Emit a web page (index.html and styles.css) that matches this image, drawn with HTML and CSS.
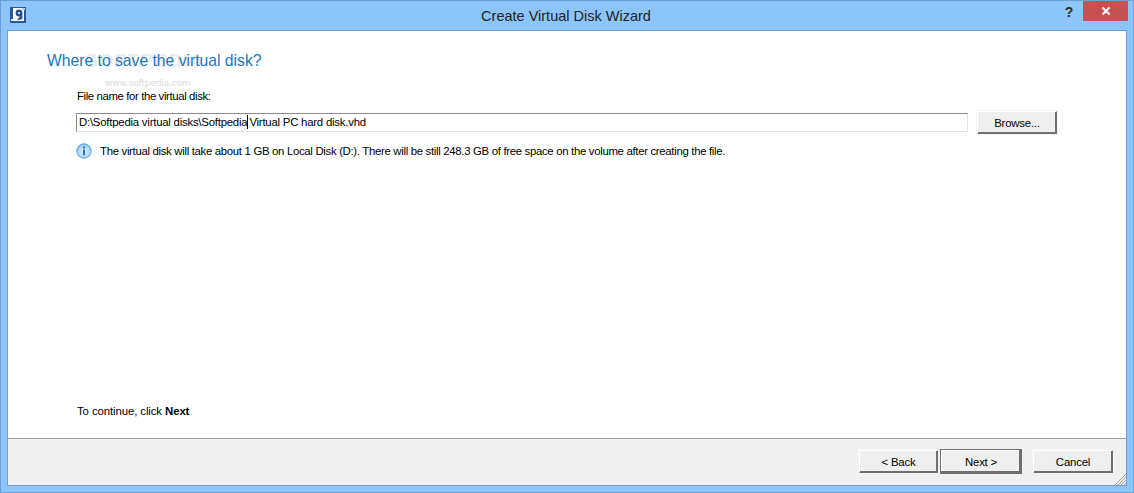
FILE: index.html
```html
<!DOCTYPE html>
<html lang="en">
<head>
<meta charset="utf-8">
<title>Create Virtual Disk Wizard</title>
<link rel="stylesheet" href="styles.css">
</head>
<body>
<div class="window">
  <header class="titlebar">
    <svg class="app-icon" width="16" height="16" viewBox="0 0 16 16">
      <rect width="16" height="16" fill="#2a5a9c"/>
      <rect x="3" y="1" width="11" height="13" fill="#fff"/>
      <circle cx="9" cy="6" r="3.4" fill="#24508e"/>
      <circle cx="9" cy="6" r="1" fill="#fff"/>
      <path d="M12.4 6 L12.4 12 L7 13.5 L9.5 10 Z" fill="#24508e"/>
      <rect x="12" y="1" width="3" height="2" fill="#b9cde8"/>
      <rect x="1" y="12" width="3" height="2" fill="#d6e2f2"/>
    </svg>
    <div class="title">Create Virtual Disk Wizard</div>
    <div class="help">?</div>
    <div class="close">
      <svg width="10" height="10" viewBox="0 0 10 10"><path d="M1.5 1.5 L8.5 8.5 M8.5 1.5 L1.5 8.5" stroke="#fff" stroke-width="2"/></svg>
    </div>
  </header>
  <div class="client">
    <main class="content">
      <div class="watermark" aria-hidden="true">
        <div class="wm-big">SOFTPEDIA</div>
        <div class="wm-small">www.softpedia.com</div>
      </div>
      <h1 class="heading">Where to save the virtual disk?</h1>
      <div class="form">
        <label class="label">File name for the virtual disk:</label>
        <div class="file-row">
          <div class="input">D:\Softpedia virtual disks\Softpedia<span class="caret"></span>Virtual PC hard disk.vhd</div>
          <button class="btn browse">Browse...</button>
        </div>
        <div class="info">
          <svg class="info-icon" width="16" height="16" viewBox="0 0 16 16">
            <defs><radialGradient id="g" cx="50%" cy="55%" r="55%"><stop offset="0" stop-color="#e8f4fd"/><stop offset="0.65" stop-color="#b5daf7"/><stop offset="1" stop-color="#6fb2e8"/></radialGradient></defs>
            <circle cx="8" cy="8" r="7.3" fill="url(#g)" stroke="#5fa5e0" stroke-width="0.9"/>
            <rect x="7" y="3.6" width="2" height="2" fill="#1f6fc0"/>
            <rect x="7" y="6.6" width="2" height="5.6" fill="#1f6fc0"/>
          </svg>
          <span>The virtual disk will take about 1 GB on Local Disk (D:). There will be still 248.3 GB of free space on the volume after creating the file.</span>
        </div>
        <div class="hint">To continue, click <b>Next</b></div>
      </div>
    </main>
    <footer class="footer">
      <button class="btn back">&lt; Back</button>
      <button class="btn next">Next &gt;</button>
      <button class="btn cancel">Cancel</button>
      <svg class="grip" width="12" height="12" viewBox="0 0 12 12"><path d="M12 1 L1 12 M12 4 L4 12 M12 7 L7 12 M12 10 L10 12" stroke="#a0a0a0" stroke-width="1"/></svg>
    </footer>
  </div>
</div>
</body>
</html>
```
FILE: styles.css
```css
* { box-sizing: border-box; }
html, body { margin: 0; height: 100%; }
body { font-family: "Liberation Sans", Arial, sans-serif; font-size: 12px; color: #000; overflow: hidden; }
.window {
  width: 1134px; height: 493px;
  background: #8bc5fa;
  border: 1px solid #6f9fd2;
  display: flex; flex-direction: column;
  padding: 0 6px 6px 6px;
}
.titlebar { height: 29px; flex: none; display: flex; align-items: flex-start; position: relative; }
.app-icon { margin: 6px 0 0 3px; flex: none; }
.title { position: absolute; left: 0; right: 2px; top: 7px; text-align: center; font-size: 14.5px; line-height: 17px; color: #222; }
.help { position: absolute; right: 51px; top: 2px; font: bold 14px/17px "Liberation Sans", sans-serif; color: #2b2b2b; width: 14px; text-align: center; margin-top: 1px; }
.close { position: absolute; right: -1px; top: 0; width: 45px; height: 20px; background: #c75050; display: flex; align-items: center; justify-content: center; }
.client { flex: 1; background: #fff; border: 1px solid #6f9fd2; display: flex; flex-direction: column; min-height: 0; }
.content { flex: 1; position: relative; padding: 20px 0 0 39px; display: flex; flex-direction: column; min-height: 0; }
.heading { margin: 0; font-size: 15.7px; font-weight: 400; line-height: 20px; color: #1c76bb; position: relative; }
.watermark { position: absolute; left: 77px; top: 20px; color: #ececec; }
.wm-big { font: bold 19px/20px "Liberation Sans", sans-serif; letter-spacing: 1.2px; }
.wm-small { font: 9.2px/14px "DejaVu Sans", sans-serif; text-align: center; margin-top: 5px; color: #dcdcdc; width: 84px; margin-left: 20px; letter-spacing: -0.25px; white-space: nowrap; }
.form { flex: 1; display: flex; flex-direction: column; padding-left: 29px; padding-top: 18px; position: relative; }
.label { line-height: 15px; font-size: 11.4px; letter-spacing: -0.39px; padding-left: 1px; }
.file-row { display: flex; margin-top: 7px; align-items: flex-start; }
.input {
  width: 892px; height: 19px; margin-top: 2px;
  border: 1px solid #e3e3e3; border-top-color: #8a8a8a; border-left-color: #8a8a8a;
  font-size: 11.4px; letter-spacing: -0.23px; line-height: 17px; padding-left: 2px; white-space: nowrap;
}
.caret { display: inline-block; width: 1px; height: 14px; background: #000; vertical-align: -3px; margin: 0 1px 0 0; }
.btn {
  font-family: inherit; font-size: 11.4px; letter-spacing: -0.2px; color: #000; background: #efefef; padding: 0;
  border: 1px solid; border-color: #fff #6f6f6f #6f6f6f #fff;
  box-shadow: 0 0 0 1px #f4f4f4, inset -1px -1px 0 #6f6f6f;
}
.browse { width: 80px; height: 23px; margin-left: 9px; }
.info { display: flex; align-items: center; margin-top: 8px; height: 18px; font-size: 11.4px; letter-spacing: -0.32px; gap: 8px; }
.info-icon { flex: none; }
.hint { margin-top: auto; margin-bottom: 19px; padding-left: 1px; font-size: 11.4px; letter-spacing: -0.1px; line-height: 15px; }
.footer { flex: none; height: 47px; background: #f0f0f0; border-top: 1px solid #a0a0a0; display: flex; align-items: flex-start; justify-content: flex-end; padding: 11px 13px 0 0; position: relative; }
.back { width: 79px; height: 23px; }
.next { width: 82px; height: 25px; margin: -1px 0 0 2px; border-color: #6f6f6f; box-shadow: inset -2px -2px 0 #6f6f6f, inset 1px 1px 0 #fff; }
.cancel { width: 80px; height: 23px; margin-left: 11px; }
.grip { position: absolute; right: 0; bottom: 0; }
```
